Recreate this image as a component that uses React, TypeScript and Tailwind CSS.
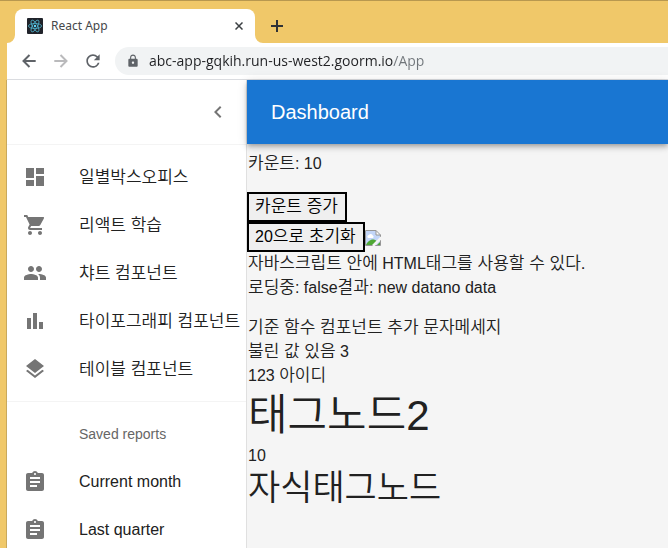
import React, { useState } from 'react';
import {
  MdAssignment,
  MdBarChart,
  MdChevronLeft,
  MdDashboard,
  MdLayers,
  MdLock,
  MdPeople,
  MdRefresh,
  MdShoppingCart,
} from 'react-icons/md';
import type { IconType } from 'react-icons';

interface MenuItem {
  label: string;
  icon: IconType;
}

const MAIN_ITEMS: MenuItem[] = [
  { label: '일별박스오피스', icon: MdDashboard },
  { label: '리액트 학습', icon: MdShoppingCart },
  { label: '챠트 컴포넌트', icon: MdPeople },
  { label: '타이포그래피 컴포넌트', icon: MdBarChart },
  { label: '테이블 컴포넌트', icon: MdLayers },
];

const REPORT_ITEMS: MenuItem[] = [
  { label: 'Current month', icon: MdAssignment },
  { label: 'Last quarter', icon: MdAssignment },
];

// Hangul runs a little larger than the Latin text around it
const Ko: React.FC<{ children: React.ReactNode }> = ({ children }) => (
  <span className="text-[17px] leading-none font-[350]">{children}</span>
);

const ReactLogo = () => (
  <svg viewBox="0 0 16 16" className="size-4 shrink-0" aria-hidden="true">
    <rect width="16" height="16" rx="1" fill="#20232a" />
    <g fill="none" stroke="#4fb3cc" strokeWidth="0.8">
      <ellipse cx="8" cy="8" rx="6.6" ry="2.5" />
      <ellipse cx="8" cy="8" rx="6.6" ry="2.5" transform="rotate(60 8 8)" />
      <ellipse cx="8" cy="8" rx="6.6" ry="2.5" transform="rotate(120 8 8)" />
    </g>
    <circle cx="8" cy="8" r="1.2" fill="#61dafb" />
  </svg>
);

const BrokenImage = () => (
  <svg viewBox="0 0 16 16" className="size-4" role="img" aria-label="image">
    <path d="M.5 .5H11L15.5 5V15.500H.5Z" fill="#c3d6f9" />
    <path d="M2.500 7.500a1.800 1.800 0 0 1 1.500-2.500 2 2 0 0 1 3.700.4A1.500 1.500 0 0 1 8 8H3.500Z" fill="#fff" />
    <path d="M1 15C2 12 5 9.500 8 9.500c1.500 0 2.500.5 3.500 1.500L7.500 15Z" fill="#4fa835" />
    <path d="M15 12L12 15H15Z" fill="#4fa835" />
    <path d="M11 .5V5H15.500Z" fill="#fff" />
    <path d="M.5 15.500V.5H11L15.500 5V15.500ZM11 .5V5H15.500" fill="none" stroke="#969696" />
    <path d="M16.500 7.500L8 16" stroke="#f5f5f5" strokeWidth="2.5" />
  </svg>
);

const NavArrow: React.FC<{ flip?: boolean }> = ({ flip }) => (
  <svg viewBox="0 0 20 20" className={`size-5 ${flip ? '-scale-x-100' : ''}`} fill="none" stroke="currentColor" strokeWidth="2">
    <path d="M16.700 10H4.500M10.500 4L4.500 10L10.500 16" />
  </svg>
);

// Outward curve where the active tab meets the toolbar
const TabFoot: React.FC<{ flip?: boolean }> = ({ flip }) => (
  <svg viewBox="0 0 8 8" className={`size-2 shrink-0 self-end ${flip ? '-scale-x-100' : ''}`} aria-hidden="true">
    <path d="M8 0V8H0A8 8 0 0 0 8 0Z" fill="#fff" />
  </svg>
);

const BrowserBar = () => (
  <header className="shrink-0">
    <div className="flex h-[42px] pt-2">
      <TabFoot />
      <div className="flex w-60 items-center rounded-t-lg bg-white pr-2 pl-3 font-['Noto_Sans','Noto_Sans_CJK_KR',sans-serif]">
        <ReactLogo />
        <span className="ml-2 flex-1 text-xs text-[#45474a]">React App</span>
        <button aria-label="Close tab" className="flex size-4 items-center justify-center text-[#3c4043]">
          <svg viewBox="0 0 8 8" className="size-2" fill="none" stroke="currentColor" strokeWidth="1.5">
            <path d="M.5 .5L7.5 7.5M7.5 .5L.5 7.5" />
          </svg>
        </button>
      </div>
      <TabFoot flip />
      <button aria-label="New tab" className="flex size-7 items-center justify-center self-center text-[#2f3235]">
        <svg viewBox="0 0 12 12" className="size-3" fill="none" stroke="currentColor" strokeWidth="2">
          <path d="M6 0V12M0 6H12" />
        </svg>
      </button>
    </div>
    <div className="flex h-[37px] items-center border-b border-[#dadce0] bg-white pl-3 text-[#5f6368]">
      <button aria-label="Back" className="mr-3"><NavArrow /></button>
      <button aria-label="Forward" className="mr-3 text-[#bababc]"><NavArrow flip /></button>
      <button aria-label="Reload" className="mr-3"><MdRefresh className="size-5" /></button>
      <label className="flex h-7 flex-1 items-center rounded-l-full bg-[#f1f3f4] pl-[11px]">
        <MdLock className="size-[14px] shrink-0" />
        <input
          aria-label="Address"
          defaultValue="abc-app-gqkih.run-us-west2.goorm.io/App"
          className="ml-[9px] min-w-0 flex-1 bg-linear-to-r from-[#202124] from-[244px] to-[#70757a] to-[244px] bg-clip-text font-['Open_Sans',sans-serif] text-sm text-transparent outline-none"
        />
      </label>
    </div>
  </header>
);

const MenuRow: React.FC<{ item: MenuItem }> = ({ item }) => {
  const Icon = item.icon;
  const hangul = /[가-힣]/.test(item.label);
  return (
    <li>
      <a href="#" className="flex h-12 items-center px-4 whitespace-nowrap">
        <span className="w-14 shrink-0 text-[#757575]"><Icon className="size-6" /></span>
        {hangul ? <Ko>{item.label}</Ko> : <span>{item.label}</span>}
      </a>
    </li>
  );
};

const Drawer = () => (
  <aside className="w-60 shrink-0 border-r border-[#e0e0e0] bg-white">
    <div className="flex h-16 items-center justify-end px-4">
      <button aria-label="Close drawer" className="text-[#757575]"><MdChevronLeft className="size-6" /></button>
    </div>
    <nav className="border-t border-[#f4f4f4] pt-2">
      <ul>
        {MAIN_ITEMS.map((item) => <MenuRow key={item.label} item={item} />)}
      </ul>
      <hr className="my-2 border-[#f4f4f4]" />
      <h2 className="pl-[72px] text-sm leading-[48px] text-[#666666]">Saved reports</h2>
      <ul>
        {REPORT_ITEMS.map((item) => <MenuRow key={item.label} item={item} />)}
      </ul>
    </nav>
  </aside>
);

const Content = () => {
  const [count, setCount] = useState(10);

  return (
    <main className="px-px pt-2">
      <p className="mb-4"><Ko>카운트</Ko>: {count}</p>
      <div className="-ml-px">
        <button onClick={() => setCount(count + 1)} className="block h-[30px] border-2 border-black bg-[#efefef] pr-[7px] pl-1.5 text-black">
          <Ko>카운트 증가</Ko>
        </button>
        <div className="flex items-end">
          <button onClick={() => setCount(20)} className="h-[30px] border-2 border-black bg-[#efefef] pr-[7px] pl-1.5 text-black">
            20<Ko>으로 초기화</Ko>
          </button>
          <span className="pb-1.5"><BrokenImage /></span>
        </div>
      </div>
      <p><Ko>자바스크립트 안에</Ko> HTML<Ko>태그를 사용할 수 있다.</Ko></p>
      <p className="mb-4"><Ko>로딩중</Ko>: false<Ko>결과</Ko>: new datano data</p>
      <p><Ko>기준 함수 컴포넌트 추가 문자메세지</Ko></p>
      <p><Ko>불린 값 있음</Ko> 3</p>
      <p>123 <Ko>아이디</Ko></p>
      <h1 className="text-[42px] leading-[56px]">
        <span className="text-[43px] leading-none font-[350]">태그노드</span>2
      </h1>
      <p>10</p>
      <h2 className="text-[35px] leading-[40px] font-[350]">자식태그노드</h2>
    </main>
  );
};

export default function App() {
  return (
    <div className="flex h-screen flex-col overflow-hidden border-t border-[#b8984f] bg-[#f0c869] font-['Liberation_Sans','Noto_Sans_CJK_KR',sans-serif] text-base text-[#212121]">
      <div className="flex min-h-0 flex-1 flex-col pl-[7px]">
        <BrowserBar />
        <div className="flex min-h-0 flex-1 shadow-[-1px_0_0_#c9a95c]">
          <Drawer />
          <div className="min-w-0 flex-1 bg-[#f5f5f5]">
            <div className="flex h-16 items-center bg-[#1976d2] px-6 shadow-[0_2px_4px_-1px_rgba(0,0,0,0.2),0_4px_5px_0_rgba(0,0,0,0.14),0_1px_10px_0_rgba(0,0,0,0.12)]">
              <h1 className="text-xl text-white">Dashboard</h1>
            </div>
            <Content />
          </div>
        </div>
      </div>
    </div>
  );
}
